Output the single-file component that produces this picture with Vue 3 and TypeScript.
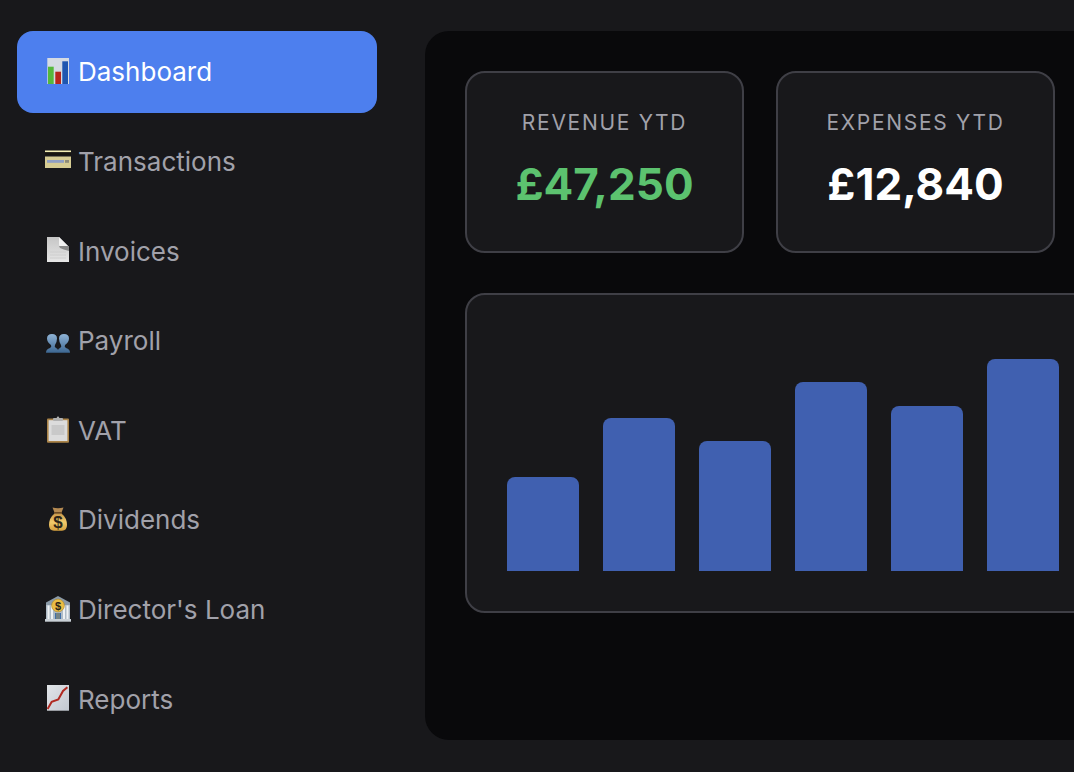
<script setup lang="ts">
interface NavItem {
  key: string
  label: string
  active?: boolean
}

const navItems: NavItem[] = [
  { key: 'chart', label: 'Dashboard', active: true },
  { key: 'card', label: 'Transactions' },
  { key: 'doc', label: 'Invoices' },
  { key: 'people', label: 'Payroll' },
  { key: 'clipboard', label: 'VAT' },
  { key: 'bag', label: 'Dividends' },
  { key: 'bank', label: "Director's Loan" },
  { key: 'trend', label: 'Reports' }
]

const bars = [94, 153, 130, 189, 165, 212]
</script>

<template>
  <div class="shell">
    <nav class="sidebar">
      <a v-for="item in navItems" :key="item.key" class="nav-item" :class="{ active: item.active }">
        <svg class="nav-icon" viewBox="0 0 28 28" aria-hidden="true">
          <template v-if="item.key === 'chart'">
            <rect x="3.3" y="0" width="21.7" height="26" fill="#d5dbe3" />
            <rect x="4" y="8.7" width="5.7" height="17.3" fill="#55b83c" />
            <rect x="11.3" y="13.7" width="5.7" height="12.3" fill="#b8261c" />
            <rect x="18.3" y="3.3" width="5.7" height="22.7" fill="#1f56b0" />
          </template>
          <template v-else-if="item.key === 'card'">
            <rect x="1" y="3.5" width="26" height="1.8" fill="#f3eeb4" />
            <rect x="1" y="5.3" width="26" height="2.7" fill="#17150f" />
            <rect x="1" y="9.5" width="26" height="11.5" fill="#d6cc93" />
            <rect x="3" y="13" width="17" height="2.8" fill="#8f9fc4" />
            <rect x="21" y="13" width="4" height="2.8" fill="#8c8a78" />
          </template>
          <template v-else-if="item.key === 'doc'">
            <defs>
              <linearGradient id="sheet" x1="0" y1="0" x2="0" y2="1">
                <stop offset="0" stop-color="#c6c6c6" />
                <stop offset="1" stop-color="#e6e6e6" />
              </linearGradient>
            </defs>
            <path d="M3 0H15L25 10V25H3Z" fill="url(#sheet)" />
            <path d="M15 0L25 10H17Q15 10 15 7Z" fill="#f2f2f2" />
            <path d="M15 9H25V14Q19 12.5 16 11Z" fill="#8a8a8a" />
            <path d="M6 15H22M6 18H22M6 21H22" stroke="#cecece" stroke-width="1" />
          </template>
          <template v-else-if="item.key === 'people'">
            <defs>
              <linearGradient id="bust" x1="0" y1="0" x2="0" y2="1">
                <stop offset="0" stop-color="#8fb3d6" />
                <stop offset="1" stop-color="#3d6792" />
              </linearGradient>
            </defs>
            <path d="M2 25.7Q2 22 6 21Q8 20 7 18Q3 15 3 11.5Q3 7 8 7Q13 7 13 11.5Q13 15 11 18Q10 20 12 21Q13.5 21.6 14 23Q14.5 21.6 16 21Q18 20 17 18Q15 15 15 11.5Q15 7 20 7Q25 7 25 11.5Q25 15 21 18Q20 20 22 21Q26 22 26 25.7Z" fill="url(#bust)" />
          </template>
          <template v-else-if="item.key === 'clipboard'">
            <rect x="3" y="2.5" width="22" height="24.2" rx="1" fill="#ab8449" />
            <rect x="4.6" y="4.2" width="18.8" height="20.8" fill="#dcdcdc" />
            <rect x="7.5" y="9" width="13" height="10" fill="#c9c9c9" />
            <rect x="9" y="2" width="10" height="3" rx="1" fill="#b0b0b0" />
            <circle cx="14" cy="1.8" r="1.2" fill="#b0b0b0" />
          </template>
          <template v-else-if="item.key === 'bag'">
            <defs>
              <linearGradient id="gold" x1="0" y1="0" x2="0" y2="1">
                <stop offset="0" stop-color="#c9974a" />
                <stop offset="0.5" stop-color="#f2cb6c" />
                <stop offset="1" stop-color="#d49f3e" />
              </linearGradient>
            </defs>
            <path d="M8.5 1.5Q14 3 19.5 1.5L17.5 6.5H10.5Z" fill="#b58a52" />
            <rect x="10" y="6" width="8" height="1.6" fill="#6b4a24" />
            <path d="M10.5 7.5Q5 12 5 19Q5 24.7 10 24.7H18Q23 24.7 23 19Q23 12 17.5 7.5Z" fill="url(#gold)" />
            <text x="14" y="22" text-anchor="middle" class="glyph" font-size="17">$</text>
          </template>
          <template v-else-if="item.key === 'bank'">
            <path d="M14 0L26 6.5V9H2V6.5Z" fill="#8b9aa8" />
            <rect x="2" y="9" width="24" height="14" fill="#aebbc7" />
            <path d="M4.5 9.5V23M8 9.5V23M20 9.5V23M23.5 9.5V23" stroke="#eef1f3" stroke-width="2" />
            <rect x="11" y="17" width="6" height="6" fill="#3f6fa8" />
            <path d="M13 17V23M15 17V23" stroke="#d8ab45" stroke-width="0.7" />
            <rect x="1" y="23" width="26" height="2.7" fill="#c9d0d6" />
            <circle cx="14" cy="9.5" r="6.4" fill="#eabd45" stroke="#a9852a" stroke-width="0.6" />
            <text x="14" y="13.6" text-anchor="middle" class="glyph" font-size="11">$</text>
          </template>
          <template v-else-if="item.key === 'trend'">
            <defs>
              <linearGradient id="paper" x1="0" y1="0" x2="1" y2="1">
                <stop offset="0" stop-color="#e2e5e9" />
                <stop offset="1" stop-color="#c2c8d0" />
              </linearGradient>
            </defs>
            <rect x="3" y="0" width="22" height="25.7" fill="url(#paper)" />
            <path d="M3.6 24L7.7 16.7L14.3 14.4L19 6L23.4 2.3" fill="none" stroke="#b02a22" stroke-width="2" />
          </template>
        </svg>
        <span>{{ item.label }}</span>
      </a>
    </nav>

    <main class="content">
      <section class="stats">
        <div class="stat-card">
          <div class="stat-label">REVENUE YTD</div>
          <div class="stat-value positive">£47,250</div>
        </div>
        <div class="stat-card">
          <div class="stat-label">EXPENSES YTD</div>
          <div class="stat-value">£12,840</div>
        </div>
      </section>

      <section class="chart-card">
        <div v-for="(height, i) in bars" :key="i" class="bar" :style="{ height: height + 'px' }"></div>
      </section>
    </main>
  </div>
</template>

<style>
html,
body {
  margin: 0;
  background: #18181b;
  overflow: hidden;
}
</style>

<style scoped>
.shell {
  display: flex;
  width: 1074px;
  height: 772px;
  padding: 31px 0 32px;
  box-sizing: border-box;
  overflow: hidden;
  background: #18181b;
  font-family: Inter, "Liberation Sans", sans-serif;
}

.sidebar {
  flex: 0 0 425px;
  box-sizing: border-box;
  padding-left: 17px;
  padding-right: 48px;
  display: flex;
  flex-direction: column;
  gap: 8px;
}

.nav-item {
  flex: 1;
  display: flex;
  align-items: center;
  gap: 6px;
  padding-left: 27px;
  border-radius: 16px;
  font-size: 26px;
  color: #a1a1aa;
}

.nav-item.active {
  background: #4d7fee;
  color: #fff;
}

.nav-icon {
  flex: none;
  width: 28px;
  height: 28px;
}

.glyph {
  font-family: "Liberation Sans", sans-serif;
  font-weight: 700;
  fill: #2b2418;
}

.content {
  flex: none;
  width: 720px;
  box-sizing: border-box;
  padding: 40px;
  border-radius: 24px;
  background: #09090b;
  display: flex;
  flex-direction: column;
  gap: 40px;
}

.stats {
  display: flex;
  gap: 32px;
}

.stat-card {
  width: 279px;
  height: 182px;
  box-sizing: border-box;
  padding: 33px 0 31px;
  border: 2px solid #3f3f46;
  border-radius: 20px;
  background: #18181b;
  display: flex;
  flex-direction: column;
  align-items: center;
  gap: 9px;
}

.stat-label {
  font-size: 21px;
  line-height: 34px;
  letter-spacing: 1.7px;
  color: #a1a1aa;
}

.stat-value {
  font-size: 44px;
  line-height: 70px;
  font-weight: 700;
  color: #fff;
}

.stat-value.positive {
  color: #5cc26f;
}

.chart-card {
  height: 320px;
  box-sizing: border-box;
  border: 2px solid #3f3f46;
  border-radius: 20px;
  background: #18181b;
  padding: 0 40px 40px;
  display: flex;
  align-items: flex-end;
  gap: 24px;
}

.bar {
  flex: none;
  width: 72px;
  border-radius: 8px 8px 0 0;
  background: #4060b0;
}
</style>
